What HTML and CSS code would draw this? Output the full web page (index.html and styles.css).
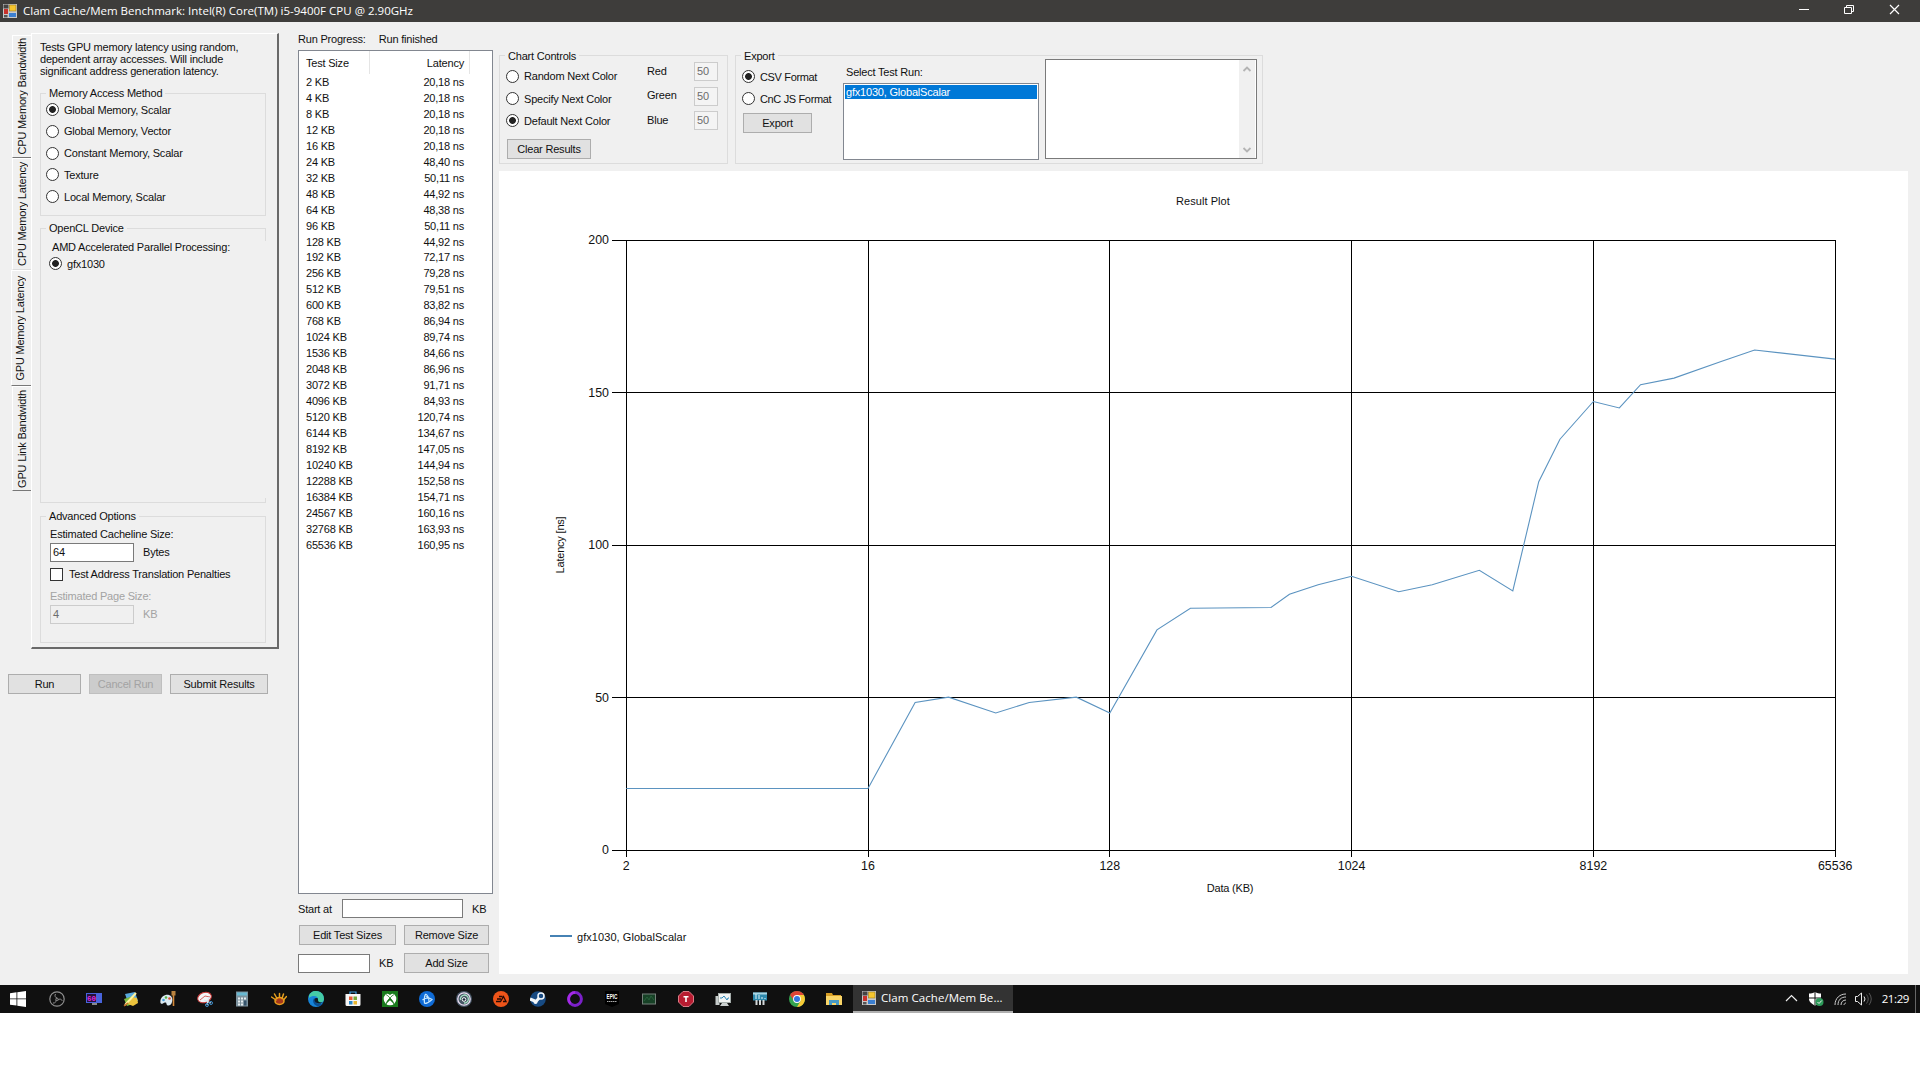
FILE: index.html
```html
<!DOCTYPE html>
<html lang="en">
<head>
  <meta charset="UTF-8" />
  <title>Clam Cache/Mem Benchmark</title>
  <link rel="stylesheet" href="styles.css">
</head>
<body>
  <svg class="defs" width="0" height="0">
    <symbol id="app-icon" viewBox="0 0 14 14">
      <rect width="14" height="14" fill="#c9c9c9"/>
      <rect x="0.5" y="0.5" width="5" height="4" fill="#444"/>
      <rect x="1" y="5" width="4" height="5" fill="#c8322c"/>
      <rect x="6.5" y="1" width="6.5" height="6" fill="#f6c62e" stroke="#9a7a20" stroke-width=".6"/>
      <rect x="6" y="9" width="7" height="4" fill="#3c7fd0"/>
      <rect x="1" y="11" width="3.5" height="2.4" fill="#555"/>
    </symbol>
  </svg>

  <!-- Title bar -->
  <div class="titlebar">
    <svg class="app-icon" width="14" height="14"><use href="#app-icon"/></svg>
    <span class="title">Clam Cache/Mem Benchmark: Intel(R) Core(TM) i5-9400F CPU @ 2.90GHz</span>
    <svg class="win-buttons" width="104" height="22" fill="none" stroke="#fff">
      <path d="M0 9.5h10"/>
      <path d="M45.500 7.500h7v6h-7zM47.500 7.500v-2h7v6h-2"/>
      <path d="M91 5l9 9M100 5l-9 9" stroke-width="1.2"/>
    </svg>
  </div>

  <div class="window">
    <!-- Left: test tabs -->
    <div class="left">
      <div class="tabs-wrap">
        <div class="tabs">
          <div class="tab tab-1"><span>CPU Memory Bandwidth</span></div>
          <div class="tab tab-2"><span>CPU Memory Latency</span></div>
          <div class="tab tab-3 selected"><span>GPU Memory Latency</span></div>
          <div class="tab tab-4"><span>GPU Link Bandwidth</span></div>
        </div>
        <div class="panel">
          <p class="description">Tests GPU memory latency using random,<br>dependent array accesses. Will include<br>significant address generation latency.</p>
          <div class="group access">
            <span class="legend">Memory Access Method</span>
            <div class="option"><i class="radio on"></i>Global Memory, Scalar</div>
            <div class="option"><i class="radio"></i>Global Memory, Vector</div>
            <div class="option"><i class="radio"></i>Constant Memory, Scalar</div>
            <div class="option"><i class="radio"></i>Texture</div>
            <div class="option"><i class="radio"></i>Local Memory, Scalar</div>
          </div>
          <div class="group device">
            <span class="legend">OpenCL Device</span>
            <div class="device-list">
              <div class="platform">AMD Accelerated Parallel Processing:</div>
              <div class="option"><i class="radio on"></i>gfx1030</div>
            </div>
          </div>
          <div class="group advanced">
            <span class="legend">Advanced Options</span>
            <div class="line">Estimated Cacheline Size:</div>
            <div class="field"><span class="box">64</span>Bytes</div>
            <div class="check"><i class="checkbox"></i>Test Address Translation Penalties</div>
            <div class="line off">Estimated Page Size:</div>
            <div class="field off"><span class="box">4</span>KB</div>
          </div>
        </div>
      </div>
      <div class="actions">
        <div class="btn run">Run</div>
        <div class="btn cancel">Cancel Run</div>
        <div class="btn submit">Submit Results</div>
      </div>
    </div>

    <!-- Middle: result list -->
    <div class="middle">
      <div class="progress"><span>Run Progress:</span><span>Run finished</span></div>
      <div class="list">
        <div class="list-head"><span class="size">Test Size</span><span class="latency">Latency</span></div>
        <div id="rows"></div>
      </div>
      <div class="start"><span class="start-label">Start at</span><span class="box"></span><span>KB</span></div>
      <div class="edit"><div class="btn">Edit Test Sizes</div><div class="btn">Remove Size</div></div>
      <div class="add"><span class="box"></span><span class="unit">KB</span><div class="btn">Add Size</div></div>
    </div>

    <!-- Right: controls and chart -->
    <div class="right">
      <div class="controls">
        <div class="group chart-controls">
          <span class="legend">Chart Controls</span>
          <div class="modes">
            <div class="option"><i class="radio"></i>Random Next Color</div>
            <div class="option"><i class="radio"></i>Specify Next Color</div>
            <div class="option"><i class="radio on"></i>Default Next Color</div>
            <div class="btn">Clear Results</div>
          </div>
          <div class="rgb">
            <div><span>Red</span><span class="box">50</span></div>
            <div><span>Green</span><span class="box">50</span></div>
            <div><span>Blue</span><span class="box">50</span></div>
          </div>
        </div>
        <div class="group export">
          <span class="legend">Export</span>
          <div class="formats">
            <div class="option"><i class="radio on"></i>CSV Format</div>
            <div class="option"><i class="radio"></i>CnC JS Format</div>
            <div class="btn">Export</div>
          </div>
          <div class="runs">
            <div class="runs-label">Select Test Run:</div>
            <div class="listbox"><div class="item">gfx1030, GlobalScalar</div></div>
          </div>
          <div class="output">
            <svg class="scrollbar" width="16" height="98" fill="none" stroke="#b4b4b4" stroke-width="1.8">
              <path d="M4.500 11l3.500-3.500 3.500 3.500M4.500 88l3.500 3.500 3.500-3.500"/>
            </svg>
          </div>
        </div>
      </div>
      <svg class="chart" width="1409" height="803" viewBox="499 171 1409 803">
        <g id="grid" stroke="#000" shape-rendering="crispEdges"></g>
        <g id="labels" class="axis-label"></g>
        <polyline id="series" fill="none" stroke="#5b93c0" stroke-width="1.1"/>
        <text x="1203" y="205" text-anchor="middle" class="chart-title">Result Plot</text>
        <text x="1230" y="892" text-anchor="middle">Data (KB)</text>
        <text transform="translate(564 545) rotate(-90)" text-anchor="middle">Latency [ns]</text>
        <path d="M550 936h22" stroke="#4682b4" stroke-width="2"/>
        <text x="577" y="941" class="legend-label">gfx1030, GlobalScalar</text>
      </svg>
    </div>
  </div>

  <!-- Taskbar -->
  <div class="taskbar">
    <div class="task start-btn"><svg width="16" height="16" viewBox="0 0 16 16" fill="#fff"><path d="M0 2.200l6.500-.9v6.200H0zM7.300 1.200L16 0v7.500H7.300zM0 8.300h6.500v6.200L0 13.700zM7.300 8.300H16V16l-8.700-1.200z"/></svg></div>
    <div class="task"><svg width="16" height="16" viewBox="0 0 16 16" fill="none" stroke="#8f8f8f"><circle cx="8" cy="8" r="7.200" stroke-width="1.200"/><path d="M8 7C6 6.500 5.500 4.500 6.500 3M9 9c1.500-1.500 3.500-1 4.200.8M7 9c.3 2-1 3.300-3 3"/><circle cx="8" cy="8.300" r="1.200"/></svg></div>
    <div class="task"><svg width="16" height="16" viewBox="0 0 16 16"><rect y="2" width="16" height="10" fill="#4864dc"/><rect x="1" y="3" width="9" height="8" fill="#26103a"/><path d="M6 12h5v2H6z" fill="#888"/><text x="1" y="9.500" class="ico-text" fill="#e62ae0">60</text></svg></div>
    <div class="task"><svg width="16" height="16" viewBox="0 0 16 16"><path d="M2 3l10-2 3 9-9 4z" fill="#58a8dc"/><path d="M1 8l9-3 3 7-9 3z" fill="#7dbb42"/><path d="M9 6l5 1 1 5-5 3-5-2z" fill="#ecc33c"/><path d="M2 14L13 2" stroke="#fff3a0" stroke-width="2"/><path d="M1 15l4-3" stroke="#c86b24" stroke-width="1.500"/></svg></div>
    <div class="task"><svg width="16" height="16" viewBox="0 0 16 16"><path d="M.5 12C-.5 6 5 3 9 4c3 1 4 4 3 7-1 4-4 4-5 3s0-3-2-2.500-3 2.500-4.500.5z" fill="#dceaf2"/><circle cx="3.500" cy="9" r="1.300" fill="#4b9ed8"/><circle cx="6" cy="6.500" r="1.300" fill="#58b248"/><circle cx="9.500" cy="7.500" r="1.300" fill="#e05236"/><path d="M13.500 4v11" stroke="#d58a3a" stroke-width="1.600"/><path d="M11.500 0h4v4.500h-4z" fill="#b9823f"/></svg></div>
    <div class="task"><svg width="16" height="16" viewBox="0 0 16 16"><ellipse cx="7.500" cy="6.500" rx="7" ry="5" transform="rotate(-20 7.500 6.500)" fill="#f4f4f6" stroke="#c83838"/><path d="M3 9l5-4 5 1" stroke="#d46060" fill="none"/><path d="M7 9l7 3M12 6l-2 8" stroke="#d9e9f4" stroke-width="1.300"/><circle cx="10" cy="14" r="1.500" fill="none" stroke="#3f8ec9"/><circle cx="14" cy="12" r="1.500" fill="none" stroke="#3f8ec9"/></svg></div>
    <div class="task"><svg width="16" height="16" viewBox="0 0 16 16"><rect x="2" y=".5" width="12" height="15" fill="#7c929e"/><rect x="3" y="1.500" width="10" height="3" fill="#67b9d2"/><path d="M4 6.500h2v2H4zM7 6.500h2v2H7zM10 6.500h2v2h-2zM4 9.500h2v2H4zM7 9.500h2v2H7zM4 12.500h2v2H4zM7 12.500h2v2H7z" fill="#e6edf0"/><path d="M10 9.500h2.500v5H10z" fill="#35536b"/></svg></div>
    <div class="task"><svg width="16" height="16" viewBox="0 0 16 16" fill="none" stroke="#e9a01e" stroke-width="1.500"><ellipse cx="8.500" cy="10" rx="4.500" ry="3.400" fill="#a5371b"/><path d="M5 9L.5 6M6 7.500L3.500 3M8.500 6.500v-4M11 7.500L12.500 3M12.500 9L15.500 5.500" stroke-linecap="round"/></svg></div>
    <div class="task"><svg width="16" height="16" viewBox="0 0 16 16"><circle cx="8" cy="8" r="8" fill="#1684d8"/><path d="M1 4.200A8 8 0 0 1 16 8c0 2.500-2 3.500-4 3.500-3 0-2-2-2-3.500 0-3-5-4.500-9-1z" fill="#45cba5"/><path d="M6.500 7C4 9 5 13.500 9 15c3 .5 5-1 6-2.500-3 1.500-8 1-8.500-5.500z" fill="#0b4d91"/><path d="M10 8c0-1.500-3-1.500-3.500.3-.2 3 2.500 4.600 6 4.200l2.800-1.200C12 12 9.500 11 10 8z" fill="#0c1b25"/></svg></div>
    <div class="task"><svg width="16" height="16" viewBox="0 0 16 16"><path d="M5 3.500V1h6v2.500" fill="none" stroke="#3d9ee0" stroke-width="1.200"/><path d="M.5 3h15v10.500a1.500 1.500 0 0 1-1.500 1.500H2A1.500 1.500 0 0 1 .5 13.500z" fill="#f6f6f6"/><path d="M4 5.500h3.500V9H4z" fill="#e65b35"/><path d="M8.500 5.500H12V9H8.500z" fill="#72a83b"/><path d="M4 10h3.500v3.500H4z" fill="#2c88c9"/><path d="M8.500 10H12v3.500H8.500z" fill="#e8b52f"/></svg></div>
    <div class="task"><svg width="16" height="16" viewBox="0 0 16 16"><rect width="16" height="16" fill="#187a1c"/><circle cx="8" cy="8" r="6.300" fill="#fff"/><path d="M3.800 13.500C4.500 10.500 6.500 8 8 6.800c1.500 1.200 3.500 3.700 4.200 6.700C11 12 9.300 10.200 8 9.200 6.700 10.200 5 12 3.800 13.500zM4.500 2.500C6 2.500 7 3.300 8 4 9 3.300 10 2.500 11.500 2.500L8 1z" fill="#187a1c"/><path d="M3.800 3.500c2.500 1 6.500 5.500 8.400 9.500M12.200 3.500c-2.500 1-6.500 5.500-8.400 9.500" stroke="#187a1c" fill="none" stroke-width=".8"/></svg></div>
    <div class="task"><svg width="16" height="16" viewBox="0 0 16 16"><circle cx="8" cy="8" r="8" fill="#0f6bd6"/><path d="M6.500 3c2 1 3.500 4.500 3.500 8M3.500 9c2-2 6-2.500 9.500-.5M5.500 12.500C5 9 5.500 5 6.500 3M5.500 12.500c3 0 5.500-2 7.500-4L7 5.500" fill="none" stroke="#c9e9ff" stroke-width="1.100"/></svg></div>
    <div class="task"><svg width="16" height="16" viewBox="0 0 16 16"><circle cx="8" cy="8" r="8" fill="#465665"/><circle cx="8" cy="8" r="6.200" fill="none" stroke="#ecdff3" stroke-width="1.300"/><path d="M4.500 9A4 4 0 1 1 8 12" fill="none" stroke="#a8e2c5" stroke-width="1.300"/><circle cx="8" cy="8.500" r="1.800" fill="#172838" stroke="#fff"/></svg></div>
    <div class="task"><svg width="16" height="16" viewBox="0 0 16 16"><circle cx="8" cy="8" r="8" fill="#ee5419"/><path d="M6 5.500h3.500M4 8h4M3 10.500h4.500L10.500 5.500 13 10.500H10" fill="none" stroke="#260904" stroke-width="1.300"/></svg></div>
    <div class="task"><svg width="16" height="16" viewBox="0 0 16 16"><circle cx="8" cy="8" r="7.800" fill="#174a82"/><path d="M0 8l6 2.500L10 6" stroke="#f4f8fb" stroke-width="3" fill="none"/><circle cx="11" cy="5" r="3" fill="#174a82" stroke="#f4f8fb" stroke-width="1.500"/><circle cx="5.500" cy="11" r="2" fill="#f4f8fb"/></svg></div>
    <div class="task"><svg width="16" height="16" viewBox="0 0 16 16"><circle cx="8" cy="8" r="6.400" fill="none" stroke="#7b20c9" stroke-width="3"/><path d="M3.500 12.500A6.400 6.400 0 0 1 8 1.600" fill="none" stroke="#a52ae6" stroke-width="2.500"/></svg></div>
    <div class="task"><svg width="16" height="16" viewBox="0 0 16 16"><path d="M1 0h14v13l-7 3-7-3z" fill="#000"/><text x="8" y="8" class="ico-text epic" text-anchor="middle" textLength="11" lengthAdjust="spacingAndGlyphs" fill="#fff">EPIC</text><path d="M3 10.500h10" stroke="#aaa" stroke-dasharray="1.500 .5"/></svg></div>
    <div class="task"><svg width="16" height="16" viewBox="0 0 16 16"><rect x="1" y="2.500" width="14" height="11" fill="#75817a"/><rect x="2" y="3.500" width="12" height="9" fill="#174126"/><path d="M3 10l3-4 2 3 2-4 3 4" stroke="#28603a" fill="none"/></svg></div>
    <div class="task"><svg width="16" height="16" viewBox="0 0 16 16"><path d="M5 .5h6L15.500 5v6L11 15.500H5L.5 11V5z" fill="#b81c31" stroke="#dc7b86"/><path d="M5.500 5.800h5M8 5.500v5.500" stroke="#fff" stroke-width="1.600"/></svg></div>
    <div class="task"><svg width="16" height="16" viewBox="0 0 16 16"><path d="M.5 5h4v9h-4z" fill="#c6cccb"/><rect x="3.500" y="2.500" width="12" height="9" fill="#f2f4f3" stroke="#a5adaa"/><path d="M5 7h2l2-2 3 4 1-2h1" fill="none" stroke="#2c87b8"/><path d="M7 12h5l2 3H5z" fill="#cbd0cf"/></svg></div>
    <div class="task"><svg width="16" height="16" viewBox="0 0 16 16"><path d="M1 1.500h14v8H1z" fill="#2d89ad"/><path d="M1 1.500h14v2H1z" fill="#a8d5e3"/><path d="M4 3v5M7 4v4M10 6v2M13 7v1" stroke="#e5f6fb"/><path d="M4.500 9v5M8 9v5M11.500 9v5" stroke="#d3d8da" stroke-width="2"/></svg></div>
    <div class="task"><svg width="16" height="16" viewBox="0 0 16 16"><circle cx="8" cy="8" r="8" fill="#34a350"/><path d="M8 8L1.100 4A8 8 0 0 1 14.900 4z" fill="#df4435"/><path d="M8 8V4h6.900A8 8 0 0 1 8 16l3.500-6z" fill="#f8ca35"/><path d="M1.100 4L5 10l3-6z" fill="#df4435"/><circle cx="8" cy="8" r="3.900" fill="#fff"/><circle cx="8" cy="8" r="3" fill="#3476df"/></svg></div>
    <div class="task"><svg width="16" height="16" viewBox="0 0 16 16"><path d="M0 2h6l1 2h8v3H0z" fill="#d69d25"/><path d="M0 5h16v9H0z" fill="#f9d568"/><path d="M3 14V9h10v5h-3v-2H6v2z" fill="#4799c4"/></svg></div>
    <div class="task-active"><svg class="app-icon" width="14" height="14"><use href="#app-icon"/></svg><span>Clam Cache/Mem Be...</span></div>
    <div class="tray">
      <svg width="88" height="28" fill="none" stroke="#eee">
        <path d="M1 16l5.500-5.500L12 16" stroke-width="1.200"/>
        <path d="M30 7c-2 1.500-4 1.500-6 1.500V14c0 3 3 5 6 6.500 3-1.500 6-3.500 6-6.500V8.500c-2 0-4 0-6-1.500z" fill="#fff" stroke="none"/>
        <path d="M30 7v13M24 13h12" stroke="#111"/>
        <circle cx="34.500" cy="17" r="4" fill="#2c9a59" stroke="none"/>
        <path d="M32.500 17l1.500 1.500 2.800-3"/>
        <path d="M50 20C50 13 55 9 61 9M53 20c0-5 3-8 8-8M56 20c0-3 2-5 5-5M59 20c0-1 1-2 2-2" stroke="#ccc"/>
        <path d="M70.500 11.500h2l4-3.500v12l-4-3.500h-2z"/>
        <path d="M79 11.500q2 2.500 0 5" />
        <path d="M81.500 9.500q3.500 4.500 0 9M84 8q4.500 6 0 12" stroke="#555"/>
      </svg>
      <span class="clock">21:29</span>
    </div>
  </div>

  <script>
    const results = [
      [2, "20,18"], [4, "20,18"], [8, "20,18"], [12, "20,18"], [16, "20,18"],
      [24, "48,40"], [32, "50,11"], [48, "44,92"], [64, "48,38"], [96, "50,11"],
      [128, "44,92"], [192, "72,17"], [256, "79,28"], [512, "79,51"], [600, "83,82"],
      [768, "86,94"], [1024, "89,74"], [1536, "84,66"], [2048, "86,96"], [3072, "91,71"],
      [4096, "84,93"], [5120, "120,74"], [6144, "134,67"], [8192, "147,05"], [10240, "144,94"],
      [12288, "152,58"], [16384, "154,71"], [24567, "160,16"], [32768, "163,93"], [65536, "160,95"]
    ];

    document.getElementById("rows").innerHTML = results
      .map(([kb, ns]) => `<div class="row"><span>${kb} KB</span><span>${ns} ns</span></div>`)
      .join("");

    // log2 x axis, linear y axis
    const px = (kb) => 626.2 + Math.log2(kb / 2) * 80.6;
    const py = (ns) => 850 - ns * 3.05;

    let grid = "";
    let labels = "";
    [2, 16, 128, 1024, 8192, 65536].forEach((kb) => {
      grid += `<path d="M${Math.floor(px(kb)) + 0.5} 240V857"/>`;
      labels += `<text x="${px(kb)}" y="870" text-anchor="middle">${kb}</text>`;
    });
    [0, 50, 100, 150, 200].forEach((ns) => {
      grid += `<path d="M612 ${py(ns)}H1836"/>`;
      labels += `<text x="609" y="${py(ns) + 4}" text-anchor="end">${ns}</text>`;
    });
    document.getElementById("grid").innerHTML = grid;
    document.getElementById("labels").innerHTML = labels;
    document.getElementById("series").setAttribute(
      "points",
      results.map(([kb, ns]) => px(kb) + "," + py(parseFloat(ns.replace(",", ".")))).join(" ")
    );
  </script>
</body>
</html>
```
FILE: styles.css
```css
/* ===== Base ===== */
* {
  box-sizing: border-box;
}
body {
  margin: 0;
  background: #fff;
  color: #111;
  font-family: "Liberation Sans", Arial, sans-serif;
  font-size: 11px;
  line-height: 12px;
  letter-spacing: -0.2px;
  white-space: nowrap;
  overflow: hidden;
}
.defs {
  display: none;
}

/* ===== Title bar ===== */
.titlebar {
  display: flex;
  align-items: center;
  height: 22px;
  padding-left: 3px;
  background: #3e3d3b;
  color: #fff;
}
.title {
  flex: 1;
  margin-left: 6px;
  font-family: "Open Sans", sans-serif;
  font-size: 11.5px;
  letter-spacing: 0.01px;
}
.win-buttons {
  margin-right: 17px;
}

/* ===== Window ===== */
.window {
  display: flex;
  height: 963px;
  background: #f0f0f0;
}
.left {
  width: 298px;
  padding-top: 11px;
}
.middle {
  width: 201px;
  padding-top: 11px;
}
.right {
  padding-top: 33px;
}

/* ===== Shared controls ===== */
.group {
  position: relative;
  border: 1px solid #dcdcdc;
}
.legend {
  position: absolute;
  top: -7px;
  left: 5px;
  padding: 0 3px;
  background: #f0f0f0;
}
.btn {
  height: 20px;
  border: 1px solid #adadad;
  background: #e1e1e1;
  line-height: 18px;
  text-align: center;
}
.box {
  display: block;
  height: 19px;
  padding-left: 2px;
  border: 1px solid #7a7a7a;
  background: #fff;
  line-height: 17px;
}
.option {
  display: flex;
  align-items: center;
  height: 21.8px;
}
.radio {
  width: 13px;
  height: 13px;
  margin-right: 5px;
  border: 1px solid #333;
  border-radius: 50%;
  background: #fff;
}
.radio.on {
  background: radial-gradient(circle, #222 3px, #fff 3.8px);
}
.checkbox {
  width: 13px;
  height: 13px;
  margin-right: 6px;
  border: 1px solid #333;
  background: #fff;
}

/* ===== Left ===== */
.tabs-wrap {
  display: flex;
  height: 616px;
  padding-left: 11px;
}
.tabs {
  width: 20px;
  padding-top: 2px;
}
.tab {
  display: flex;
  align-items: center;
  justify-content: center;
  margin-left: 1px;
  border-top: 1px solid #fff;
  border-left: 1px solid #fff;
  border-bottom: 1px solid #777;
}
.tab span {
  writing-mode: vertical-rl;
  transform: rotate(180deg);
}
.tab-1 {
  height: 123px;
}
.tab-2 {
  height: 112px;
  border-bottom-color: #ddd;
}
.tab-3 {
  height: 116px;
}
.tab-4 {
  height: 105px;
}
.tab.selected {
  margin-left: 0;
  padding-right: 3px;
}
.panel {
  width: 248px;
  padding: 7px 0 0 8px;
  border: 1px solid #fff;
  border-right: 2px solid #696969;
  border-bottom: 2px solid #696969;
}
.description {
  margin: 0;
  line-height: 12.2px;
}
.panel .group {
  width: 226px;
}
.access {
  height: 123px;
  margin-top: 15px;
  padding: 5px 0 0 5px;
}
.device {
  height: 275px;
  margin-top: 12px;
}
.device-list {
  width: 226px;
  height: 257px;
  margin-top: 12px;
  padding-left: 8px;
  background: #f0f0f0;
}
.platform {
  height: 12px;
  padding-left: 3px;
}
.advanced {
  height: 127px;
  margin-top: 13px;
  padding: 11px 0 0 9px;
}
.line {
  height: 15px;
}
.field {
  display: flex;
  align-items: center;
  gap: 9px;
}
.field .box {
  width: 84px;
}
.check {
  display: flex;
  align-items: center;
  height: 13px;
  margin: 6px 0 9px;
}
.off {
  color: #a3a3a3;
}
.off .box {
  border-color: #ccc;
  background: #f0f0f0;
  color: #6d6d6d;
}
.actions {
  display: flex;
  gap: 8px;
  padding: 25px 0 0 8px;
}
.run, .cancel {
  width: 73px;
}
.cancel {
  border-color: #bfbfbf;
  background: #ccc;
  color: #a3a3a3;
}
.submit {
  width: 98px;
}

/* ===== Middle ===== */
.progress {
  display: flex;
  gap: 13px;
  height: 17px;
}
.list {
  width: 195px;
  height: 844px;
  border: 1px solid #828790;
  background: #fff;
}
.list-head {
  display: flex;
  height: 23px;
  line-height: 24px;
}
.size {
  width: 71px;
  padding-left: 7px;
  border-right: 1px solid #e5e5e5;
}
.latency {
  width: 100px;
  padding-right: 5px;
  border-right: 1px solid #e5e5e5;
  text-align: right;
}
.row {
  display: flex;
  justify-content: space-between;
  width: 165px;
  height: 15.96px;
  padding-left: 7px;
  line-height: 16px;
}
.start, .edit, .add {
  display: flex;
  align-items: center;
}
.start {
  margin-top: 5px;
}
.start-label {
  width: 44px;
}
.start .box {
  width: 121px;
  margin-right: 9px;
}
.edit {
  gap: 8px;
  margin: 7px 0 8px 1px;
}
.edit .btn {
  width: 97px;
}
.edit .btn + .btn, .add .btn {
  width: 85px;
}
.add .box {
  width: 72px;
}
.unit {
  width: 34px;
  padding-left: 9px;
}

/* ===== Right ===== */
.controls {
  display: flex;
  gap: 7px;
  height: 116px;
}
.controls .group {
  display: flex;
  height: 109px;
}
.controls .legend {
  top: -6px;
}
.chart-controls {
  width: 229px;
}
.modes {
  width: 147px;
  padding: 9px 0 0 6px;
}
.modes .option {
  height: 22.4px;
}
.modes .btn {
  width: 84px;
  margin: 7px 0 0 1px;
}
.rgb {
  padding-top: 6px;
}
.rgb div {
  display: flex;
  align-items: center;
  height: 19px;
  margin-bottom: 5.5px;
}
.rgb span:first-child {
  width: 47px;
  padding-bottom: 2px;
}
.rgb .box {
  width: 24px;
  border-color: #ccc;
  background: #f4f4f4;
  color: #6d6d6d;
}
.export {
  width: 528px;
}
.formats {
  width: 107px;
  padding: 10px 0 0 6px;
}
.formats .option {
  letter-spacing: -0.35px;
}
.formats .btn {
  width: 69px;
  margin: 3.4px 0 0 1px;
}
.runs {
  width: 196px;
  padding-top: 10px;
}
.runs-label {
  height: 17px;
  padding-left: 3px;
}
.listbox {
  height: 77px;
  padding: 1px;
  border: 1px solid #828790;
  background: #fff;
}
.item {
  height: 14px;
  padding-left: 1px;
  background: #0078d7;
  color: #fff;
  line-height: 15px;
}
.output {
  display: flex;
  justify-content: flex-end;
  width: 212px;
  height: 100px;
  margin: 3px 0 0 6px;
  padding-right: 1px;
  border: 1px solid #7a7a7a;
  background: #fff;
}
.scrollbar {
  background: #f0f0f0;
}
.chart {
  display: block;
  background: #fff;
  fill: #111;
}
.chart-title, .legend-label {
  letter-spacing: 0.06px;
}
.axis-label {
  font-size: 12.4px;
  letter-spacing: 0;
}

/* ===== Taskbar ===== */
.taskbar {
  display: flex;
  height: 28px;
  background: #101010;
  color: #fff;
  font-family: "Open Sans", sans-serif;
}
.task {
  display: flex;
  align-items: center;
  justify-content: center;
  width: 37px;
}
.start-btn {
  width: 38px;
  padding-right: 2px;
}
.ico-text {
  font: bold 7.5px "Liberation Mono", monospace;
  letter-spacing: 0;
}
.epic {
  font: bold 7.5px "Liberation Sans", sans-serif;
}
.task-active {
  display: flex;
  align-items: center;
  gap: 5px;
  width: 160px;
  margin-left: 1px;
  padding-left: 9px;
  border-bottom: 2px solid #b0b0b0;
  background: #333;
  font-size: 11.5px;
  letter-spacing: 0.06px;
}
.tray {
  display: flex;
  align-items: center;
  margin-left: auto;
  margin-right: 4px;
  padding-right: 6px;
  border-right: 1px solid #666;
}
.clock {
  margin-left: 9px;
  font-size: 11.5px;
  letter-spacing: -0.4px;
}
```
